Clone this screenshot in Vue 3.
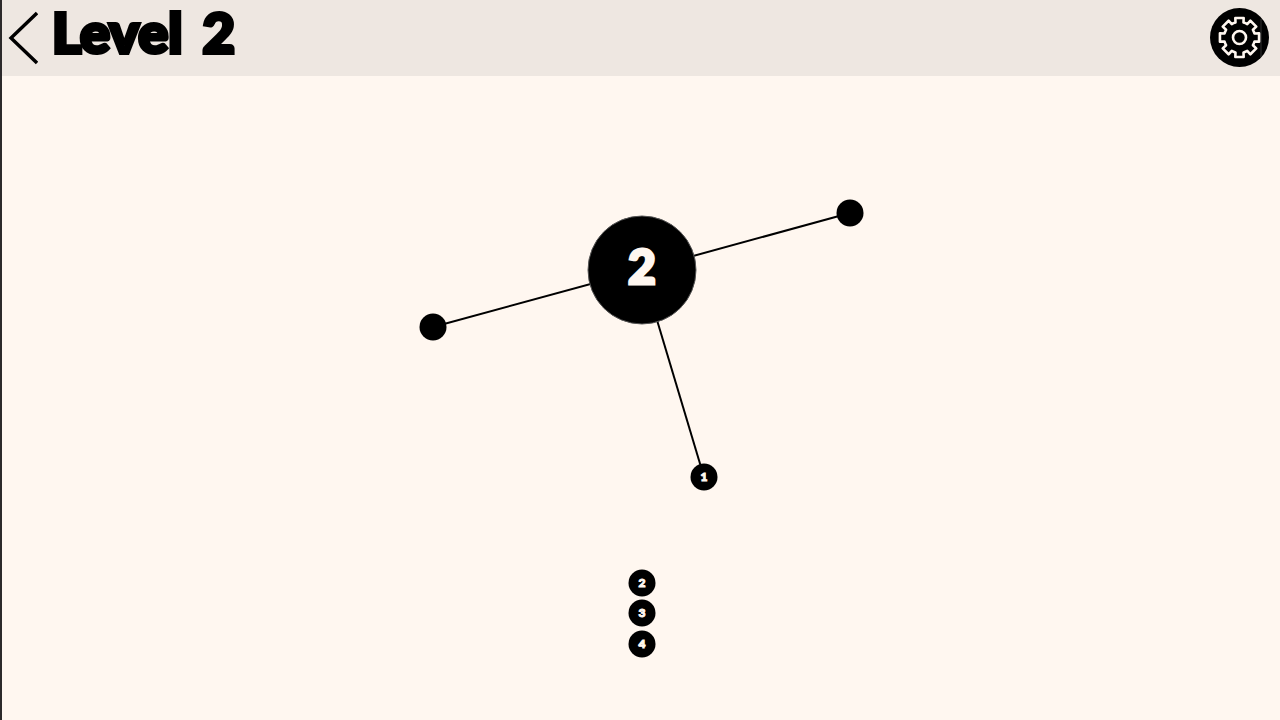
<script setup>
const level = 2
const hub = { x: 640, y: 194, r: 54 }
const pins = [
  { x: 848, y: 137, label: '' },
  { x: 431, y: 251, label: '' },
  { x: 702, y: 401, label: '1' },
]
const queue = [
  { x: 640, y: 507, label: '2' },
  { x: 640, y: 537, label: '3' },
  { x: 640, y: 568, label: '4' },
]

function gearPath(teeth, inner, outer) {
  const point = (radius, degrees) => {
    const a = (degrees * Math.PI) / 180
    return `${(30 + radius * Math.sin(a)).toFixed(2)} ${(30 - radius * Math.cos(a)).toFixed(2)}`
  }
  let d = ''
  for (let i = 0; i < teeth; i++) {
    const a = (i * 360) / teeth
    d += `${i ? 'L' : 'M'}${point(inner, a - 15)} L${point(outer, a - 12)} L${point(outer, a + 12)} L${point(inner, a + 15)} `
    d += `A${inner} ${inner} 0 0 1 ${point(inner, a + 360 / teeth - 15)} `
  }
  return d + 'Z'
}
const gear = gearPath(8, 15.5, 20)
</script>

<template>
  <div class="game">
    <header class="bar">
      <button class="back" type="button" aria-label="Back">
        <svg width="32" height="56" viewBox="0 0 32 56" aria-hidden="true">
          <path d="M31 3 L5 28 L31 53" fill="none" stroke="#000" stroke-width="3.4" />
        </svg>
      </button>
      <h1 class="title"><span>Level</span> <span>{{ level }}</span></h1>
      <button class="settings" type="button" aria-label="Settings">
        <svg width="60" height="60" viewBox="0 0 60 60" aria-hidden="true">
          <circle cx="29.5" cy="29.5" r="29.5" fill="#000" />
          <path d="M51 11V49" stroke="#333" stroke-width="1" />
          <g transform="translate(-0.5 -0.5)" fill="none" stroke="#fff7f0" stroke-width="2.6">
            <path :d="gear" stroke-linejoin="round" />
            <circle cx="30" cy="30" r="6.5" />
          </g>
        </svg>
      </button>
    </header>
    <main class="stage">
      <svg class="board" viewBox="0 0 1278 644" role="img" aria-label="Rotating wheel with pins">
        <line
          v-for="p in pins" :key="`l${p.x}`"
          :x1="hub.x" :y1="hub.y" :x2="p.x" :y2="p.y" class="spoke"
        />
        <circle :cx="hub.x" :cy="hub.y" :r="hub.r" class="hub" />
        <text :x="hub.x" :y="hub.y + 14" class="count">{{ level }}</text>
        <g v-for="p in [...pins, ...queue]" :key="`${p.x}-${p.y}`">
          <circle :cx="p.x" :cy="p.y" r="13.5" />
          <text v-if="p.label" :x="p.x" :y="p.y + 4" class="number">{{ p.label }}</text>
        </g>
      </svg>
    </main>
  </div>
</template>

<style>
body {
  background: #fff7f0;
}
</style>

<style scoped>
.game {
  box-sizing: border-box;
  min-height: 100vh;
  display: flex;
  flex-direction: column;
  border-left: 2px solid #2c2a2b;
  background: #fff7f0;
  color: #000;
  font-family: Lato, "Open Sans", sans-serif;
}
.bar {
  display: flex;
  align-items: center;
  height: 76px;
  box-sizing: border-box;
  padding: 0 10px 0 4px;
  background: #eee7e1;
}
button {
  border: 0;
  padding: 0;
  background: none;
  color: inherit;
  cursor: pointer;
}
button svg {
  display: block;
}
.title {
  flex: 1;
  display: flex;
  gap: 20px;
  margin: 0 0 12px 14px;
  font-size: 56px;
  line-height: 64px;
  font-weight: 900;
  -webkit-text-stroke: 4px #000;
}
.stage {
  flex: 1;
  display: flex;
}
.board {
  display: block;
  width: 100%;
}
.spoke {
  stroke: #000;
  stroke-width: 2;
}
.hub {
  stroke: #555;
  stroke-width: 1;
}
.count,
.number {
  fill: #fff7f0;
  stroke: #fff7f0;
  font-weight: 900;
  text-anchor: middle;
}
.count {
  font-size: 48px;
  stroke-width: 3px;
}
.number {
  font-size: 12px;
  stroke-width: 1px;
}
</style>
